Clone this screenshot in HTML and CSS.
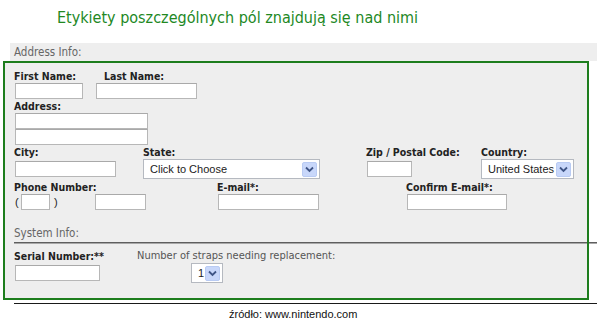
FILE: index.html
```html
<!DOCTYPE html>
<html>
<head>
    <title>Etykiety nad polami</title>
    <link rel="stylesheet" href="styles.css">
</head>
<body>

<h1 class="title">Etykiety poszczególnych pól znajdują się nad nimi</h1>

<div class="band">Address Info:</div>

<div class="panel">
    <div class="row">
        <div class="field w-first">
            <label>First Name:</label>
            <input type="text" class="in w68">
        </div>
        <div class="field">
            <label class="shift">Last Name:</label>
            <input type="text" class="in w101">
        </div>
    </div>

    <div class="field">
        <label>Address:</label>
        <input type="text" class="in w133">
        <input type="text" class="in w133">
    </div>

    <div class="row">
        <div class="field w-city">
            <label>City:</label>
            <div class="ctl"><input type="text" class="in w101"></div>
        </div>
        <div class="field w-state">
            <label>State:</label>
            <div class="ctl">
                <div class="select w177"><span>Click to Choose</span><span class="btn"><svg width="9" height="7" viewBox="0 0 9 7"><polyline points="1,1.5 4.5,5 8,1.5" fill="none" stroke="#3f5586" stroke-width="1.8"/></svg></span></div>
            </div>
        </div>
        <div class="field w-zip">
            <label>Zip / Postal Code:</label>
            <div class="ctl"><input type="text" class="in w45"></div>
        </div>
        <div class="field">
            <label>Country:</label>
            <div class="ctl">
                <div class="select w93"><span>United States</span><span class="btn"><svg width="9" height="7" viewBox="0 0 9 7"><polyline points="1,1.5 4.5,5 8,1.5" fill="none" stroke="#3f5586" stroke-width="1.8"/></svg></span></div>
            </div>
        </div>
    </div>

    <div class="row phone-row">
        <div class="field w-phone">
            <label>Phone Number:</label>
            <div class="phone">
                <span class="paren open">(</span>
                <input type="text" class="in w29">
                <span class="paren close">)</span>
                <input type="text" class="in w51">
            </div>
        </div>
        <div class="field w-email">
            <label>E-mail*:</label>
            <input type="text" class="in w101">
        </div>
        <div class="field">
            <label>Confirm E-mail*:</label>
            <input type="text" class="in w100">
        </div>
    </div>

    <div class="section">System Info:</div>
    <div class="rule"></div>

    <div class="row serial-row">
        <div class="field w-serial">
            <label>Serial Number:**</label>
            <div class="ctl"><input type="text" class="in w85"></div>
        </div>
        <div class="field">
            <label class="plain">Number of straps needing replacement:</label>
            <div class="ctl">
                <div class="select w32 straps"><span>1</span><span class="btn"><svg width="9" height="7" viewBox="0 0 9 7"><polyline points="1,1.5 4.5,5 8,1.5" fill="none" stroke="#3f5586" stroke-width="1.8"/></svg></span></div>
            </div>
        </div>
    </div>
</div>

<div class="bottom-rule"></div>
<p class="source">źródło: www.nintendo.com</p>

</body>
</html>
```

FILE: styles.css
```css
body {
    margin: 0;
    background-color: #fff;
    font-family: "DejaVu Sans Condensed", "DejaVu Sans", sans-serif;
}

.title {
    margin: 0;
    padding: 8px 0 0 57px;
    height: 19px;
    line-height: 19px;
    font-size: 16px;
    font-weight: normal;
    color: #22881f;
    white-space: nowrap;
}

.band {
    margin: 16px 0 0 10px;
    height: 18px;
    line-height: 18px;
    padding-left: 4px;
    background-color: #eee;
    font-size: 11.5px;
    color: #666;
}

.panel {
    position: relative;
    margin-left: 3px;
    width: 586px;
    box-sizing: border-box;
    padding: 8px 0 17px 11px;
    background-color: #eee;
}

/* green highlight drawn over the form */
.panel::after {
    content: "";
    position: absolute;
    top: 0;
    left: 0;
    right: 0;
    bottom: 0;
    border: 2px solid #1d7d1d;
    pointer-events: none;
}

.row {
    display: flex;
}

.field label {
    display: block;
    height: 14px;
    line-height: 14px;
    font-size: 10.5px;
    font-weight: bold;
    color: #222;
    white-space: nowrap;
}

.field label.shift {
    padding-left: 9px;
}

.field label.plain {
    font-size: 11px;
    font-weight: normal;
    color: #555;
}

.in {
    display: block;
    margin: 0 0 0 1px;
    padding: 0;
    height: 16px;
    box-sizing: border-box;
    border: 1px solid #b7b7b7;
    border-top-color: #a9a9a9;
    background-color: #fff;
}

.w29 { width: 29px; }
.w45 { width: 45px; }
.w51 { width: 51px; }
.w68 { width: 68px; }
.w85 { width: 85px; }
.w100 { width: 100px; }
.w101 { width: 101px; }
.w133 { width: 133px; }

.w-first { width: 81px; }
.w-city { width: 129px; }
.w-state { width: 223px; }
.w-zip { width: 115px; }
.w-phone { width: 203px; }
.w-email { width: 189px; }
.w-serial { width: 123px; }

.ctl {
    display: flex;
    align-items: center;
    height: 20px;
}

.select {
    display: flex;
    align-items: center;
    justify-content: space-between;
    height: 20px;
    box-sizing: border-box;
    padding: 0 2px 0 6px;
    border: 1px solid #b5b9c0;
    background-color: #fff;
    font-family: "Liberation Sans", Arial, sans-serif;
    font-size: 11px;
    color: #222;
    white-space: nowrap;
}

.w177 { width: 177px; }
.w93 { width: 93px; }
.w32 { width: 32px; }

.straps {
    margin-left: 54px;
}

.btn {
    display: flex;
    align-items: center;
    justify-content: center;
    flex: none;
    width: 15px;
    height: 15px;
    box-sizing: border-box;
    border: 1px solid #b9cbf3;
    border-radius: 2px;
    background-color: #c8d7fa;
}

.phone-row {
    margin-top: 1px;
}

.phone {
    display: flex;
    align-items: center;
}

.paren {
    font-family: "Liberation Sans", Arial, sans-serif;
    font-size: 11px;
    color: #222;
}

.paren.open {
    width: 6px;
    margin-left: 1px;
}

.paren.close {
    width: 41px;
    margin-left: 4px;
}

.phone .in {
    margin-left: 0;
}

.section {
    margin-top: 14px;
    height: 18px;
    line-height: 18px;
    font-size: 11.5px;
    color: #666;
}

.rule {
    margin-right: -8px;
    border-top: 1px solid #5e5e5e;
    border-bottom: 1px solid #a8a8a8;
}

.serial-row {
    margin-top: 5px;
}

.bottom-rule {
    margin: 3px 0 0 14px;
    border-top: 1px solid #1a1a1a;
}

.source {
    margin: 3px 0 0;
    padding-left: 229px;
    line-height: 14px;
    font-family: "Liberation Sans", Arial, sans-serif;
    font-size: 11px;
    color: #111;
}
```
